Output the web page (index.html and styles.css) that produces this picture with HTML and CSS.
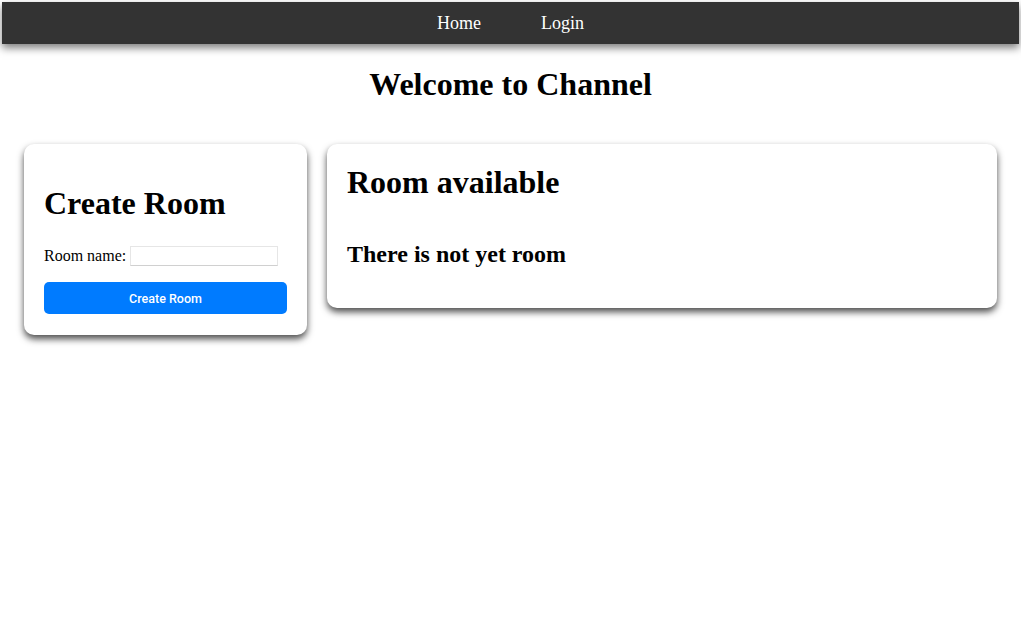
FILE: index.html
```html
<!DOCTYPE html>
<html>
<head>
<meta charset="utf-8">
<title>Channel</title>
<link rel="stylesheet" href="styles.css">
</head>
<body>
<nav class="navbar">
  <a class="nav-link" href="#">Home</a>
  <a class="nav-link" href="#">Login</a>
</nav>
<h1 class="page-title">Welcome to Channel</h1>
<main class="content">
  <section class="card card-create">
    <h1 class="create-title">Create Room</h1>
    <form class="create-form">
      <label class="field">Room name: <input class="field-input" type="text"></label>
      <button class="btn-primary" type="button">Create Room</button>
    </form>
  </section>
  <section class="card card-rooms">
    <h1 class="rooms-title">Room available</h1>
    <h2 class="rooms-empty">There is not yet room</h2>
  </section>
</main>
</body>
</html>
```
FILE: styles.css
```css
html, body {
  margin: 0;
  padding: 0;
  background: #fff;
  font-family: "Liberation Serif", "Times New Roman", serif;
  color: #000;
}
.navbar {
  margin: 2px 2px 0 2px;
  height: 42px;
  background: #333;
  display: flex;
  justify-content: center;
  align-items: center;
  box-shadow: 0 4px 8px rgba(0,0,0,0.5);
}
.nav-link {
  color: #fff;
  text-decoration: none;
  font-size: 18px;
  padding: 1px 30px 0 30px;
}
.page-title {
  text-align: center;
  font-size: 32px;
  margin: 22px 0 0 0;
  line-height: 37px;
}
.content {
  display: flex;
  align-items: flex-start;
  gap: 20px;
  padding: 0 24px 20px 24px;
  margin-top: 41px;
}
.card {
  background: #fff;
  border-radius: 10px;
  padding: 20px;
  box-shadow: 0 4px 7px rgba(0,0,0,0.7);
}
.card-create {
  width: 243px;
  flex: none;
  padding-bottom: 21px;
}
.card-rooms {
  flex: 1;
}
.create-title {
  font-size: 32px;
  line-height: 37px;
  margin: 21px 0 22px 0;
}
.create-form {
  display: flex;
  flex-direction: column;
  gap: 14px;
}
.field {
  font-size: 16px;
  line-height: 24px;
  display: flex;
  align-items: center;
  gap: 4px;
}
.field-input {
  width: 144px;
  height: 16px;
  border: 1px solid #e6e6e6;
  border-bottom-color: #d0d0d0;
  padding: 1px;
  margin: 0;
  font-size: 13px;
}
.btn-primary {
  height: 32px;
  border: none;
  border-radius: 5px;
  background: #007bff;
  color: #fff;
  font-family: Roboto, "Liberation Sans", sans-serif;
  font-size: 12.5px;
  font-weight: 500;
}
.rooms-title {
  font-size: 32px;
  line-height: 37px;
  margin: 0 0 39px 0;
}
.rooms-empty {
  font-size: 24px;
  line-height: 28px;
  margin: 0 0 20px 0;
}
```
